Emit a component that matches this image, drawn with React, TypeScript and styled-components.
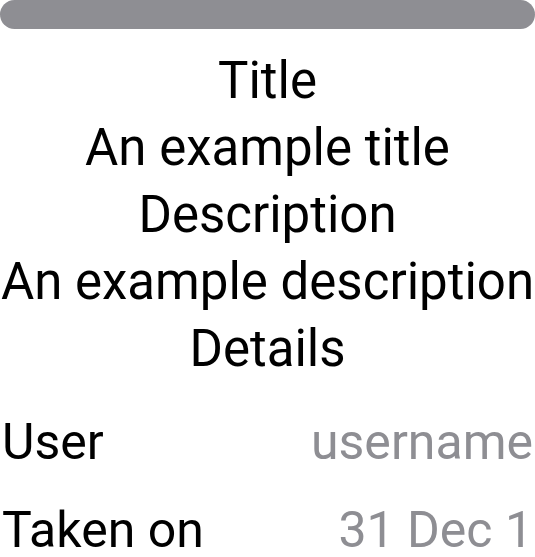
import React, { FC } from "react"
import styled, { createGlobalStyle } from "styled-components"

const GlobalStyle = createGlobalStyle`
  html, body {
    margin: 0;
    padding: 0;
    background: #ffffff;
  }
  body {
    font-family: Roboto, "Noto Sans", sans-serif;
    color: #000000;
    overflow: hidden;
  }
`

const Sheet = styled.div`
  width: 535px;
  height: 557px;
  display: flex;
  flex-direction: column;
  overflow: hidden;
`

const Grabber = styled.div`
  height: 29px;
  border-radius: 15px;
  background: #8e8e93;
  flex-shrink: 0;
`

const Header = styled.div`
  display: flex;
  flex-direction: column;
  align-items: center;
  margin-top: 18px;
`

const Line = styled.span`
  font-size: 51px;
  line-height: 67px;
  white-space: nowrap;
  text-align: center;
`

const DetailList = styled.div`
  display: flex;
  flex-direction: column;
  margin-top: 16px;
`

const Row = styled.div`
  display: flex;
  justify-content: space-between;
  align-items: center;
  height: 88px;
  padding: 0 2px;
`

const Label = styled.span`
  font-size: 50px;
  white-space: nowrap;
`

const Value = styled.span`
  font-size: 50px;
  color: #8e8e93;
  white-space: nowrap;
`

interface DetailProps {
  label: string
  value: string
}

const Detail: FC<DetailProps> = ({ label, value }) => (
  <Row>
    <Label>{label}</Label>
    <Value>{value}</Value>
  </Row>
)

const App: FC = () => {
  return (
    <>
      <GlobalStyle />
      <Sheet>
        <Grabber />
        <Header>
          <Line>Title</Line>
          <Line>An example title</Line>
          <Line>Description</Line>
          <Line>An example description</Line>
          <Line>Details</Line>
        </Header>
        <DetailList>
          <Detail label="User" value="username" />
          <Detail label="Taken on" value="31 Dec 1" />
        </DetailList>
      </Sheet>
    </>
  )
}

export default App
